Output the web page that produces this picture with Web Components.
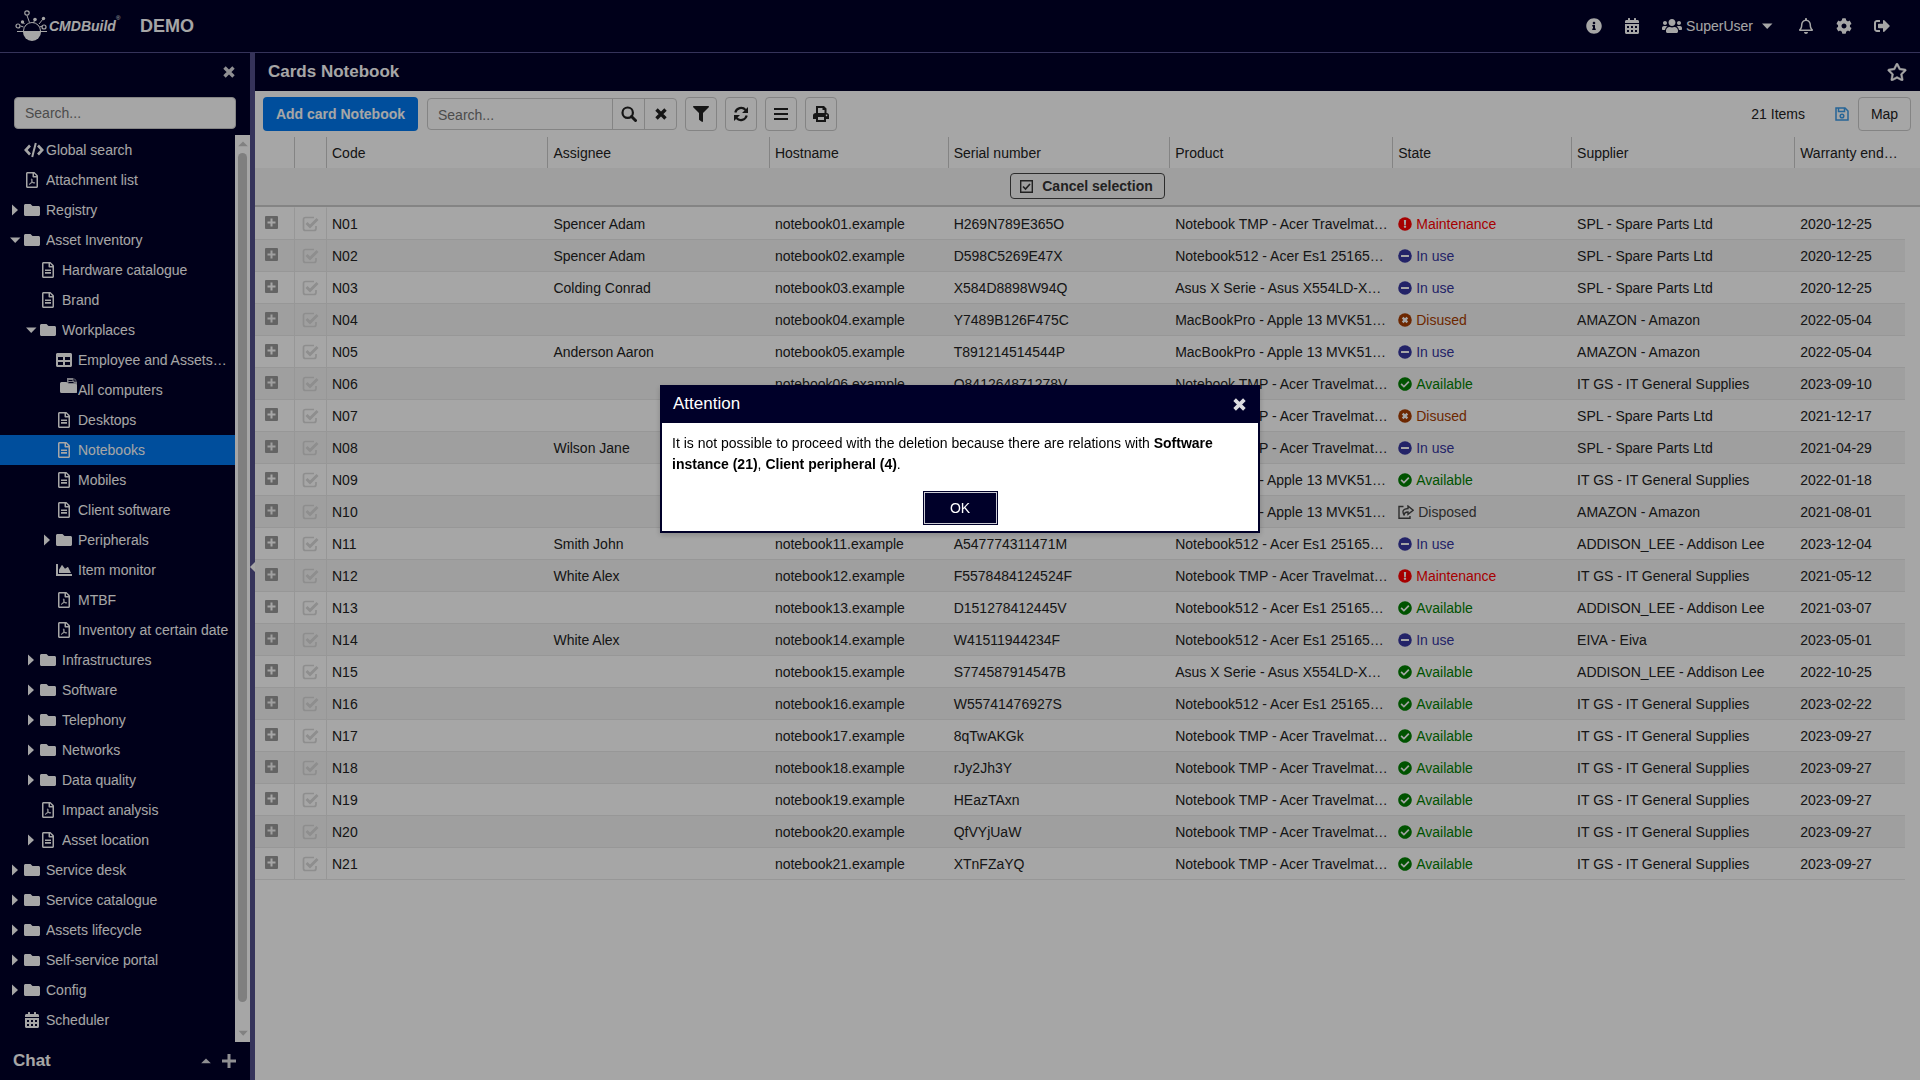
<!DOCTYPE html>
<html lang="en">
<head>
<meta charset="utf-8">
<title>CMDBuild - Cards Notebook</title>
<style>
  html, body { margin: 0; height: 100%; }
  body {
    font: 14px/20px "Liberation Sans", Arial, sans-serif;
    color: #222;
    --navy: #000029;
    --edge: #524f8a;
    --accent: #0079f0;
    --line: #cbcbcb;
    --rule: #e8e8e8;
    --stripe: #f5f5f5;
  }
</style>
</head>
<body>
<cmdb-app></cmdb-app>
<cmdb-dialog heading="Attention">It is not possible to proceed with the deletion because there are relations with <b>Software instance (21)</b>, <b>Client peripheral (4)</b>.</cmdb-dialog>

<script>
const FILE_OUTLINE = 'M384 131.900V464c0 26.500-21.500 48-48 48H48c-26.500 0-48-21.500-48-48V48C0 21.500 21.500 0 48 0h204.100C264.800 0 277 5.100 286 14.100L369.900 98c9 8.900 14.100 21.200 14.100 33.900zM256 51.900V128h76.100L256 51.900zM336 464V176H232c-13.300 0-24-10.700-24-24V48H48v416h288z';
const CAL_HOLE = 'c0-6.600 5.400-12 12-12h40c6.600 0 12 5.400 12 12v40c0 6.600-5.400 12-12 12h-40c-6.600 0-12-5.400-12-12v-40z';
const DISC = '<circle cx="256" cy="256" r="248"/>';

/* name: [viewBox, markup] */
const ICONS = {
  info: ['0 0 512 512', '<path d="M256 8C119.043 8 8 119.083 8 256c0 136.997 111.043 248 248 248s248-111.003 248-248C504 119.083 392.957 8 256 8zm0 110c23.196 0 42 18.804 42 42s-18.804 42-42 42-42-18.804-42-42 18.804-42 42-42zm56 254c0 6.627-5.373 12-12 12h-88c-6.627 0-12-5.373-12-12v-24c0-6.627 5.373-12 12-12h12v-64h-12c-6.627 0-12-5.373-12-12v-24c0-6.627 5.373-12 12-12h64c6.627 0 12 5.373 12 12v100h12c6.627 0 12 5.373 12 12v24z"/>'],
  calendar: ['0 0 448 512', `<path fill-rule="evenodd" d="M0 464c0 26.500 21.500 48 48 48h352c26.500 0 48-21.500 48-48V192H0v272zM320 268${CAL_HOLE}M320 396${CAL_HOLE}M192 268${CAL_HOLE}M192 396${CAL_HOLE}M64 268${CAL_HOLE}M64 396${CAL_HOLE}M400 64h-48V16c0-8.800-7.200-16-16-16h-32c-8.800 0-16 7.200-16 16v48H160V16c0-8.800-7.200-16-16-16h-32c-8.800 0-16 7.200-16 16v48H48C21.500 64 0 85.500 0 112v48h448v-48c0-26.500-21.500-48-48-48z"/>`],
  users: ['0 0 640 512', '<path d="M96 224c35.300 0 64-28.700 64-64s-28.700-64-64-64-64 28.700-64 64 28.700 64 64 64zm448 0c35.300 0 64-28.700 64-64s-28.700-64-64-64-64 28.700-64 64 28.700 64 64 64zm32 32h-64c-17.600 0-33.500 7.100-45.100 18.600 40.300 22.100 68.900 62 75.100 109.400h66c17.700 0 32-14.300 32-32v-32c0-35.300-28.700-64-64-64zm-256 0c61.900 0 112-50.100 112-112S381.900 32 320 32 208 82.100 208 144s50.100 112 112 112zm76.800 32h-8.300c-20.800 10-43.900 16-68.500 16s-47.600-6-68.500-16h-8.300C179.600 288 128 339.600 128 403.200V432c0 26.500 21.500 48 48 48h288c26.500 0 48-21.500 48-48v-28.800c0-63.600-51.600-115.200-115.200-115.200zm-223.700-13.400C161.500 263.100 145.600 256 128 256H64c-35.300 0-64 28.700-64 64v32c0 17.700 14.300 32 32 32h65.900c6.300-47.400 34.900-87.300 75.200-109.400z"/>'],
  bell: ['0 0 448 512', '<path d="M439.390 362.290c-19.320-20.760-55.470-51.990-55.470-154.290 0-77.700-54.480-139.900-127.940-155.160V32c0-17.670-14.320-32-31.980-32s-31.980 14.330-31.980 32v20.840C118.560 68.100 64.080 130.300 64.080 208c0 102.300-36.150 133.530-55.470 154.290-6 6.450-8.660 14.160-8.610 21.710.11 16.400 12.980 32 32.100 32h383.800c19.120 0 32-15.600 32.100-32 .05-7.550-2.610-15.270-8.610-21.710zM67.530 368c21.220-27.970 44.420-74.330 44.530-159.420 0-.2-.06-.38-.06-.58 0-61.860 50.140-112 112-112s112 50.140 112 112c0 .2-.06.38-.06.58.11 85.100 23.310 131.460 44.530 159.420H67.530zM224 512c35.320 0 63.970-28.650 63.970-64H160.030c0 35.350 28.650 64 63.970 64z"/>'],
  cog: ['0 0 512 512', '<path d="M487.400 315.700l-42.600-24.600c4.300-23.200 4.300-47 0-70.200l42.600-24.600c4.900-2.800 7.100-8.600 5.500-14-11.100-35.600-30-67.800-54.700-94.600-3.800-4.100-10-5.100-14.800-2.300L380.800 110c-17.900-15.400-38.500-27.300-60.800-35.100V25.800c0-5.600-3.900-10.500-9.400-11.700-36.700-8.200-74.300-7.800-109.200 0-5.500 1.200-9.400 6.100-9.400 11.700V75c-22.200 7.900-42.800 19.800-60.800 35.100L88.700 85.500c-4.900-2.800-11-1.900-14.800 2.300-24.700 26.700-43.600 58.900-54.700 94.600-1.700 5.400.6 11.200 5.500 14L67.300 221c-4.300 23.200-4.300 47 0 70.200l-42.600 24.600c-4.900 2.800-7.100 8.600-5.500 14 11.100 35.600 30 67.800 54.700 94.600 3.800 4.100 10 5.100 14.800 2.300l42.600-24.600c17.900 15.400 38.500 27.300 60.800 35.100v49.200c0 5.600 3.900 10.500 9.400 11.700 36.700 8.200 74.300 7.800 109.200 0 5.500-1.200 9.400-6.100 9.400-11.700v-49.200c22.200-7.900 42.800-19.800 60.800-35.100l42.600 24.600c4.900 2.800 11 1.900 14.800-2.300 24.700-26.700 43.600-58.900 54.700-94.600 1.500-5.500-.7-11.300-5.600-14.100zM256 336c-44.100 0-80-35.900-80-80s35.900-80 80-80 80 35.900 80 80-35.900 80-80 80z"/>'],
  signout: ['0 0 512 512', '<path d="M497 273L329 441c-15 15-41 4.500-41-17v-96H152c-13.300 0-24-10.700-24-24v-96c0-13.300 10.700-24 24-24h136V88c0-21.400 25.900-32 41-17l168 168c9.300 9.400 9.300 24.600 0 34zM192 436v-40c0-6.600-5.400-12-12-12H96c-17.700 0-32-14.300-32-32V160c0-17.700 14.300-32 32-32h84c6.600 0 12-5.400 12-12V76c0-6.600-5.400-12-12-12H96c-53 0-96 43-96 96v192c0 53 43 96 96 96h84c6.600 0 12-5.400 12-12z"/>'],
  star: ['0 0 576 512', '<path stroke="currentColor" stroke-width="14" d="M528.100 171.500L382 150.200 316.700 17.800c-11.700-23.600-45.600-23.900-57.400 0L194 150.200 47.900 171.500c-26.200 3.800-36.700 36.100-17.700 54.600l105.700 103-25 145.500c-4.500 26.300 23.200 46 46.400 33.700L288 439.600l130.700 68.700c23.200 12.200 50.900-7.400 46.400-33.700l-25-145.500 105.700-103c19-18.500 8.500-50.800-17.700-54.600zM388.600 312.300l23.700 138.400L288 385.400l-124.300 65.300 23.700-138.400-100.600-98 139-20.200 62.200-126 62.200 126 139 20.200-100.600 98z"/>'],
  folder: ['0 0 512 512', '<path d="M464 128H272l-64-64H48C21.490 64 0 85.490 0 112v288c0 26.510 21.490 48 48 48h416c26.510 0 48-21.490 48-48V176c0-26.510-21.490-48-48-48z"/>'],
  folderfile: ['0 0 18 18', '<path d="M7 1h7l3 3v12h-10z" opacity=".75"/><path d="M8.500 3.500h4M8.500 5.500h5M14 1v3h3" fill="none" stroke="#000029"/><path d="M1.500 5h5l2 2h7q1.500 0 1.500 1.500v6q0 1.500-1.500 1.500h-14q-1.500 0-1.500-1.500v-8q0-1.500 1.500-1.500z"/>'],
  code: ['0 0 20 16', '<g fill="none" stroke="currentColor" stroke-width="2.600"><path d="M6 3.500L1.800 8 6 12.500M14 3.500L18.200 8 14 12.500"/><path d="M11.800 1L8.200 15" stroke-width="2"/></g>'],
  file: ['0 0 384 512', `<path d="${FILE_OUTLINE}"/><path d="M96 236h192v52H96zM96 320h192v52H96z"/>`],
  pdf: ['0 0 384 512', `<path d="${FILE_OUTLINE}"/><path d="M178 222c18-12 22 16 14 58-12 46-38 96-66 116-20 10-26-10-6-26 34-26 84-38 132-36 36 0 36 28 8 24-42-8-66-46-80-90-8-26-10-40-2-46z" fill="none" stroke="currentColor" stroke-width="28"/>`],
  table: ['0 0 512 512', '<path d="M464 32H48C21.490 32 0 53.490 0 80v352c0 26.510 21.490 48 48 48h416c26.510 0 48-21.490 48-48V80c0-26.510-21.490-48-48-48zM224 416H64v-96h160v96zm0-160H64v-96h160v96zm224 160H288v-96h160v96zm0-160H288v-96h160v96z"/>'],
  chart: ['0 0 512 512', '<path d="M500 384c6.600 0 12 5.400 12 12v40c0 6.600-5.400 12-12 12H12c-6.600 0-12-5.400-12-12V76c0-6.600 5.400-12 12-12h40c6.600 0 12 5.400 12 12v308h436zM372.700 159.500L288 216l-85.300-113.700c-5.100-6.800-15.500-6.300-19.900 1L96 248v104h384l-89.900-187.800c-3.200-6.500-11.400-8.700-17.400-4.700z"/>'],
  right: ['0 0 16 16', '<path d="M5 2.500v11L11 8z"/>'],
  down: ['0 0 16 16', '<path d="M3 5.500h10.500L8.200 11z"/>'],
  up: ['0 0 16 16', '<path d="M2.500 10.500h11L8 5z"/>'],
  left: ['0 0 5 10', '<path d="M5 0v10L0 5z"/>'],
  plus: ['0 0 16 16', '<path d="M6.500 1h3v5.500H15v3H9.500V15h-3V9.500H1v-3h5.500z"/>'],
  close: ['0 0 12 12', '<path d="M1.500 1.500L10.500 10.500M10.500 1.500L1.500 10.500" fill="none" stroke="currentColor" stroke-width="3.400"/>'],
  search: ['0 0 16 16', '<g fill="none" stroke="currentColor" stroke-width="2.200"><circle cx="6.700" cy="6.700" r="5.200"/><path d="M10.500 10.500l4 4" stroke-width="3" stroke-linecap="round"/></g>'],
  filter: ['0 0 512 512', '<path d="M487.976 0H24.028C2.710 0-8.047 25.866 7.058 40.971L192 225.941V432c0 7.831 3.821 15.170 10.237 19.662l80 55.980C298.020 518.690 320 507.493 320 487.980V225.941l184.947-184.970C520.021 25.896 509.338 0 487.976 0z"/>'],
  refresh: ['0 0 16 16', '<path d="M2.300 6.500A6 6 0 0 1 12.600 4M13.700 9.500A6 6 0 0 1 3.400 12" fill="none" stroke="currentColor" stroke-width="2.200"/><path d="M15 1v6H9zM1 15V9h6z"/>'],
  menu: ['0 0 16 16', '<path d="M1 2h14v2H1zM1 7h14v2H1zM1 12h14v2H1z"/>'],
  print: ['0 0 16 16', '<path fill-rule="evenodd" d="M3 0h8l2.500 2.500V7q2.500 0 2.500 2.500V13h-3v3H3v-3H0V9.500Q0 7 3 7zM5 2v5h6.500V4H9.500V2zM5 11v3h6v-3zM13.500 8.500a.8 .8 0 1 0 .1 0z"/>'],
  save: ['0 0 14 14', '<g fill="none" stroke="currentColor" stroke-width="1.500"><path d="M1 1h9l3 3v9H1z"/><path d="M3.500 1v3.500h6V1"/><circle cx="7" cy="9" r="1.800"/></g>'],
  expand: ['0 0 13 13', '<path fill-rule="evenodd" d="M1 0h11q1 0 1 1v11q0 1-1 1H1q-1 0-1-1V1q0-1 1-1zM5.500 2.500v3h-3v2h3v3h2v-3h3v-2h-3v-3z"/>'],
  checkbox: ['0 0 13 13', '<path d="M.7 .7h11.600v11.600H.7z" fill="none" stroke="currentColor" stroke-width="1.400"/><path d="M3 6.500l2.500 2.500L10 4" fill="none" stroke="currentColor" stroke-width="1.700"/>'],
  available: ['0 0 512 512', '<path d="M504 256c0 136.967-111.033 248-248 248S8 392.967 8 256 119.033 8 256 8s248 111.033 248 248zM227.314 387.314l184-184c6.248-6.248 6.248-16.379 0-22.627l-22.627-22.627c-6.248-6.249-16.379-6.249-22.628 0L216 308.118l-70.059-70.059c-6.248-6.248-16.379-6.248-22.628 0l-22.627 22.627c-6.248 6.248-6.248 16.379 0 22.627l104 104c6.249 6.249 16.379 6.249 22.628.001z"/>'],
  inuse: ['0 0 512 512', DISC + '<rect x="110" y="216" width="292" height="80" rx="12" fill="#fff"/>'],
  maintenance: ['0 0 512 512', DISC + '<path d="M214 110h84l-12 180h-60z" fill="#fff"/><circle cx="256" cy="352" r="44" fill="#fff"/>'],
  disused: ['0 0 512 512', DISC + '<path d="M170 170l172 172M342 170L170 342" stroke="#fff" stroke-width="84" fill="none"/>'],
  disposed: ['0 0 16 14', '<g fill="none" stroke="currentColor" stroke-width="1.400"><path d="M5.500 1.500H1v11.800h11V11"/><path d="M10 1l5.200 4.200L10 9.400V7Q6 7 6.200 10.500 2.500 4 10 3.500z"/></g>'],
};

class UiIcon extends HTMLElement {
  connectedCallback() {
    const [box, body] = ICONS[this.getAttribute('name')];
    const w = this.getAttribute('w') || 16;
    const h = this.getAttribute('h') || w;
    this.attachShadow({ mode: 'open' }).innerHTML =
      `<style>:host{display:inline-flex;flex:none}svg{display:block}</style>
       <svg width="${w}" height="${h}" viewBox="${box}" fill="currentColor" aria-hidden="true">${body}</svg>`;
  }
}
customElements.define('ui-icon', UiIcon);

const BASE = `
  *, *::before { box-sizing: border-box; }
  button, input { font: inherit; color: inherit; margin: 0; }
  button { display: inline-flex; align-items: center; justify-content: center; padding: 0; border: 0; background: none; cursor: pointer; }
`;
const component = (name, css, html) => customElements.define(name, class extends HTMLElement {
  connectedCallback() {
    this.attachShadow({ mode: 'open' }).innerHTML =
      `<style>${BASE}${css}</style>` + (typeof html === 'function' ? html(this) : html);
  }
});

component('cmdb-logo', `
  :host { display: flex; align-items: center; width: 106px; color: #fff; }
  .word { font: italic bold 14px/20px "Liberation Sans", Arial, sans-serif; }
  sup { font: 6px/8px "Liberation Sans", Arial, sans-serif; align-self: flex-start; padding-top: 4px; }
`, `
  <svg width="34" height="32" viewBox="0 0 34 32" fill="none" stroke="#fff" stroke-width="1.200" aria-hidden="true">
    <path d="M8.500 21a8.500 8.500 0 0 1 17 0M2 21.500h30" stroke-width="1"/><path d="M8 22h18a9 9 0 0 1-18 0z" fill="#fff" stroke="none"/>
    <path d="M12 5.500l2.500 7M9.500 14L7 11.500M18.500 13L20 9M24 14l4-5M24.500 17l3-1M5.500 16l3 1" stroke-width="1"/>
    <circle cx="12" cy="3" r="2.200"/><circle cx="3" cy="16" r="2"/><circle cx="29" cy="17" r="2"/>
    <circle cx="7.500" cy="12" r="1.700" fill="#fff" stroke="none"/><circle cx="20" cy="9.500" r="1.800" fill="#fff" stroke="none"/><circle cx="28.500" cy="8.500" r="1.700" fill="#fff" stroke="none"/>
  </svg>
  <span class="word">CMDBuild</span><sup>®</sup>
`);

component('cmdb-header', `
  :host { display: flex; align-items: center; height: 53px; padding: 0 19px 0 15px; box-sizing: border-box;
          background: var(--navy); border-bottom: 1px solid var(--edge); color: #fff; }
  h1 { flex: 1; margin: 0 0 0 19px; font-size: 18px; line-height: 20px; }
  nav { display: flex; align-items: center; }
  button { width: 38px; height: 38px; }
  .user { width: auto; padding: 0 12px 0 11px; gap: 4px; }
  .user ui-icon:last-child { margin-left: 2px; }
`, `
  <cmdb-logo></cmdb-logo><h1>DEMO</h1>
  <nav>
    <button aria-label="Information"><ui-icon name="info"></ui-icon></button>
    <button aria-label="Calendar"><ui-icon name="calendar"></ui-icon></button>
    <button class="user"><ui-icon name="users" w="20" h="16"></ui-icon>SuperUser<ui-icon name="down"></ui-icon></button>
    <button aria-label="Notifications"><ui-icon name="bell"></ui-icon></button>
    <button aria-label="Settings"><ui-icon name="cog"></ui-icon></button>
    <button aria-label="Log out"><ui-icon name="signout"></ui-icon></button>
  </nav>
`);

component('nav-item', `
  :host { display: block; }
  a { display: flex; align-items: center; height: 30px; padding-left: calc(7px + 16px * var(--level, 0)); color: #fff; text-decoration: none; }
  :host([selected]) a { background: var(--accent); }
  .toggle { display: flex; width: 17px; flex: none; }
  .icon { display: flex; width: 22px; flex: none; }
  .icon.file { padding-left: 2px; }
  .icon.folderfile { padding: 0 0 8px 4px; }
  .text { overflow: hidden; text-overflow: ellipsis; white-space: nowrap; padding-right: 6px; }
`, el => {
  const icon = el.getAttribute('icon'), toggle = el.getAttribute('toggle');
  const narrow = ['file', 'pdf'].includes(icon);
  const w = narrow ? 12 : icon === 'code' ? 20 : icon === 'folderfile' ? 18 : 16;
  const h = icon === 'folderfile' ? 18 : 16;
  return `<a href="#"><span class="toggle">${toggle ? `<ui-icon name="${toggle}"></ui-icon>` : ''}</span>
    <span class="icon ${narrow ? 'file' : icon}"><ui-icon name="${icon}" w="${w}" h="${h}"></ui-icon></span>
    <span class="text"><slot></slot></span></a>`;
});

/* level, toggle, icon, label */
const MENU = [
  [0, '', 'code', 'Global search'], [0, '', 'pdf', 'Attachment list'], [0, 'right', 'folder', 'Registry'],
  [0, 'down', 'folder', 'Asset Inventory'], [1, '', 'file', 'Hardware catalogue'], [1, '', 'file', 'Brand'],
  [1, 'down', 'folder', 'Workplaces'], [2, '', 'table', 'Employee and Assets…'], [2, '', 'folderfile', 'All computers'],
  [2, '', 'file', 'Desktops'], [2, '', 'file', 'Notebooks'], [2, '', 'file', 'Mobiles'], [2, '', 'file', 'Client software'],
  [2, 'right', 'folder', 'Peripherals'], [2, '', 'chart', 'Item monitor'], [2, '', 'pdf', 'MTBF'],
  [2, '', 'pdf', 'Inventory at certain date'], [1, 'right', 'folder', 'Infrastructures'], [1, 'right', 'folder', 'Software'],
  [1, 'right', 'folder', 'Telephony'], [1, 'right', 'folder', 'Networks'], [1, 'right', 'folder', 'Data quality'],
  [1, '', 'pdf', 'Impact analysis'], [1, 'right', 'file', 'Asset location'], [0, 'right', 'folder', 'Service desk'],
  [0, 'right', 'folder', 'Service catalogue'], [0, 'right', 'folder', 'Assets lifecycle'],
  [0, 'right', 'folder', 'Self-service portal'], [0, 'right', 'folder', 'Config'], [0, '', 'calendar', 'Scheduler'],
];

component('cmdb-sidebar', `
  :host { display: flex; flex-direction: column; min-height: 0; background: var(--navy); color: #fff; }
  .top { display: flex; justify-content: flex-end; padding: 13px 15px 0 0; height: 44px; color: #dcdce0; }
  .top button { height: 12px; }
  .find { display: block; padding: 0 14px 6px; }
  .find input { display: block; width: 100%; height: 32px; padding: 0 10px; border: 1px solid #ccc; border-radius: 4px; background: #fff; color: #222; }
  input::placeholder { color: #757575; opacity: 1; }
  .tree { display: flex; flex: 1; min-height: 0; }
  nav { flex: 1; min-width: 0; overflow: hidden; }
  .bar { display: flex; flex-direction: column; align-items: center; width: 15px; background: #fff; color: #c6c6c6; }
  .bar span { display: flex; height: 18px; align-items: center; }
  .bar i { width: 9px; flex: 1; border-radius: 5px; background: #c4c4c4; margin-bottom: 22px; }
  .chat { display: flex; align-items: center; height: 38px; padding: 0 13px; gap: 8px; color: #dcdce0; }
  h2 { flex: 1; margin: 0; font-size: 17px; line-height: 20px; color: #fff; }
`, `
  <div class="top"><button aria-label="Close menu"><ui-icon name="close" w="12"></ui-icon></button></div>
  <label class="find"><input type="text" placeholder="Search..." aria-label="Search menu"></label>
  <div class="tree">
    <nav>${MENU.map(([l, t, i, s]) => `<nav-item style="--level:${l}" toggle="${t}" icon="${i}"${s === 'Notebooks' ? ' selected' : ''}>${s}</nav-item>`).join('')}</nav>
    <div class="bar"><span><ui-icon name="up" w="14"></ui-icon></span><i></i><span><ui-icon name="down" w="14"></ui-icon></span></div>
  </div>
  <div class="chat"><h2>Chat</h2><button aria-label="Expand chat"><ui-icon name="up" w="14"></ui-icon></button><button aria-label="New chat"><ui-icon name="plus"></ui-icon></button></div>
`);

component('cmdb-toolbar', `
  :host { display: flex; align-items: center; height: 46px; padding: 0 9px 0 8px; box-sizing: border-box; gap: 8px; }
  button { height: 34px; }
  .add { width: 155px; border-radius: 4px; background: var(--accent); color: #fff; font-weight: bold; margin-right: 1px; }
  .find { display: flex; width: 250px; height: 32px; border: 1px solid var(--line); border-radius: 4px; }
  .find input { flex: 1; min-width: 0; padding: 1px 10px 0; border: 0; background: none; }
  .find button { width: 32px; height: 30px; border-left: 1px solid var(--line); }
  input::placeholder { color: #757575; opacity: 1; }
  .sq { width: 32px; border: 1px solid var(--line); border-radius: 4px; }
  .count { margin-left: auto; }
  .save { color: #3b9be8; margin: 0 1px 0 22px; }
  .map { width: 53px; border: 1px solid var(--line); border-radius: 4px; }
`, `
  <button class="add">Add card Notebook</button>
  <div class="find"><input type="text" placeholder="Search..." aria-label="Search cards"><button aria-label="Search"><ui-icon name="search"></ui-icon></button><button aria-label="Clear"><ui-icon name="close" w="12"></ui-icon></button></div>
  <button class="sq" aria-label="Filter"><ui-icon name="filter"></ui-icon></button>
  <button class="sq" aria-label="Refresh"><ui-icon name="refresh"></ui-icon></button>
  <button class="sq" aria-label="Menu"><ui-icon name="menu"></ui-icon></button>
  <button class="sq" aria-label="Print"><ui-icon name="print"></ui-icon></button>
  <span class="count">21 Items</span>
  <button class="save" aria-label="Save view"><ui-icon name="save" w="14"></ui-icon></button>
  <button class="map">Map</button>
`);

component('card-state', `
  :host { display: inline-flex; align-items: center; gap: 4px; vertical-align: top; }
  :host([kind=maintenance]) { color: #f00; }
  :host([kind=inuse]) { color: #3636a0; }
  :host([kind=disused]) { color: #a83d00; }
  :host([kind=available]) { color: #008000; }
  :host([kind=disposed]) { color: #444; }
`, el => {
  const kind = el.getAttribute('kind');
  return `<ui-icon name="${kind}" w="${kind === 'disposed' ? 16 : 14}" h="14"></ui-icon><slot></slot>`;
});

const T = 'Notebook TMP - Acer Travelmat…', E = 'Notebook512 - Acer Es1 25165…',
      X = 'Asus X Serie - Asus X554LD-X…', M = 'MacBookPro - Apple 13 MVK51…';
const SPL = 'SPL - Spare Parts Ltd', AMZ = 'AMAZON - Amazon', GS = 'IT GS - IT General Supplies', LEE = 'ADDISON_LEE - Addison Lee';
const STATES = { maintenance: 'Maintenance', inuse: 'In use', disused: 'Disused', available: 'Available', disposed: 'Disposed' };
/* assignee, serial number, product, state, supplier, warranty end */
const CARDS = [
  ['Spencer Adam', 'H269N789E365O', T, 'maintenance', SPL, '2020-12-25'],
  ['Spencer Adam', 'D598C5269E47X', E, 'inuse', SPL, '2020-12-25'],
  ['Colding Conrad', 'X584D8898W94Q', X, 'inuse', SPL, '2020-12-25'],
  ['', 'Y7489B126F475C', M, 'disused', AMZ, '2022-05-04'],
  ['Anderson Aaron', 'T891214514544P', M, 'inuse', AMZ, '2022-05-04'],
  ['', 'Q841264871278V', T, 'available', GS, '2023-09-10'],
  ['', '', T, 'disused', SPL, '2021-12-17'],
  ['Wilson Jane', '', T, 'inuse', SPL, '2021-04-29'],
  ['', '', M, 'available', GS, '2022-01-18'],
  ['', '', M, 'disposed', AMZ, '2021-08-01'],
  ['Smith John', 'A547774311471M', E, 'inuse', LEE, '2023-12-04'],
  ['White Alex', 'F5578484124524F', T, 'maintenance', GS, '2021-05-12'],
  ['', 'D151278412445V', E, 'available', LEE, '2021-03-07'],
  ['White Alex', 'W41511944234F', E, 'inuse', 'EIVA - Eiva', '2023-05-01'],
  ['', 'S774587914547B', X, 'available', LEE, '2022-10-25'],
  ['', 'W55741476927S', E, 'available', GS, '2023-02-22'],
  ['', '8qTwAKGk', T, 'available', GS, '2023-09-27'],
  ['', 'rJy2Jh3Y', T, 'available', GS, '2023-09-27'],
  ['', 'HEazTAxn', T, 'available', GS, '2023-09-27'],
  ['', 'QfVYjUaW', T, 'available', GS, '2023-09-27'],
  ['', 'XTnFZaYQ', T, 'available', GS, '2023-09-27'],
];
const COLS = ['Code', 'Assignee', 'Hostname', 'Serial number', 'Product', 'State', 'Supplier', 'Warranty end…'];
const TICK = `url("data:image/svg+xml,%3Csvg xmlns='http://www.w3.org/2000/svg' viewBox='0 0 17 16' fill='none' stroke='%23dadada'%3E%3Cpath d='M12 1.500H3.500Q1.500 1.500 1.500 3.500v9q0 2 2 2h8.500q2 0 2-2V10' stroke-width='1.700'/%3E%3Cpath d='M4.500 7l3.500 3.500L15.500 3' stroke-width='3'/%3E%3C/svg%3E")`;

component('card-grid', `
  :host { display: block; }
  table { width: 100%; table-layout: fixed; border-collapse: separate; border-spacing: 0; }
  .c-exp { width: 40px; } .c-tick { width: 32px; } .c-gap { width: 15px; }
  .c-wide { width: 13.300%; } .c-text { width: 13.400%; } .c-mid { width: 10.740%; }
  th, td { padding: 0 2px 0 5px; text-align: left; font-weight: normal; overflow: hidden; text-overflow: ellipsis; white-space: nowrap; }
  .heads th { height: 31px; border-right: 1px solid var(--line); }
  .heads th:nth-last-child(-n+2) { border-right: 0; }
  .sel td { height: 39px; padding: 0 0 1px; text-align: center; background: var(--stripe); border-bottom: 2px solid var(--line); }
  .sel button { width: 155px; height: 26px; gap: 9px; padding-right: 2px; border: 1px solid #444; border-radius: 4px; font-weight: bold; color: #333; vertical-align: middle; }
  tbody td { height: 32px; border-bottom: 1px solid var(--rule); }
  tbody tr:first-child td { height: 33px; border-top: 1px solid #fff; }
  tbody tr:nth-child(even) td:not(:last-child) { background: var(--stripe); }
  tbody td:last-child { border-bottom: 0; }
  td.exp, td.tick { border-right: 1px solid var(--rule); }
  td.exp { padding: 0 0 2px 10px; color: #9a9a9a; line-height: 0; }
  td.tick { padding: 0 0 0 7px; line-height: 0; }
  td.exp button { vertical-align: middle; }
  td.tick input { appearance: none; width: 17px; height: 16px; background: ${TICK} center / contain no-repeat; vertical-align: middle; }
`, `
  <table>
    <colgroup><col class="c-exp"><col class="c-tick"><col class="c-wide"><col class="c-wide"><col class="c-mid"><col class="c-wide"><col class="c-text"><col class="c-mid"><col class="c-text"><col><col class="c-gap"></colgroup>
    <thead>
      <tr class="heads"><th></th><th></th>${COLS.map(c => `<th scope="col">${c}</th>`).join('')}<th></th></tr>
      <tr class="sel"><td colspan="11"><button><ui-icon name="checkbox" w="13"></ui-icon>Cancel selection</button></td></tr>
    </thead>
    <tbody>${CARDS.map(([who, sn, prod, state, sup, end], i) => {
      const n = String(i + 1).padStart(2, '0');
      const covered = i >= 6 && i <= 9;
      return `<tr><td class="exp"><button aria-label="Expand N${n}"><ui-icon name="expand" w="13"></ui-icon></button></td>
        <td class="tick"><input type="checkbox" checked disabled aria-label="Select N${n}"></td>
        <td>N${n}</td><td>${who}</td><td>${covered ? '' : `notebook${n}.example`}</td><td>${sn}</td><td>${prod}</td>
        <td><card-state kind="${state}">${STATES[state]}</card-state></td><td>${sup}</td><td>${end}</td><td></td></tr>`;
    }).join('')}</tbody>
  </table>
`);

component('cmdb-app', `
  :host { display: flex; flex-direction: column; height: 100vh; background: #fff; }
  .body { display: flex; flex: 1; min-height: 0; }
  cmdb-sidebar { width: 250px; flex: none; }
  .split { width: 5px; flex: none; background: var(--edge); color: #fff; }
  main { flex: 1; min-width: 0; overflow: hidden; }
  .title { display: flex; align-items: center; justify-content: space-between; height: 38px; padding: 0 13px; background: var(--navy); color: #fff; }
  h2 { margin: 0; font-size: 17px; line-height: 20px; }
`, `
  <cmdb-header></cmdb-header>
  <div class="body">
    <cmdb-sidebar></cmdb-sidebar>
    <button class="split" aria-label="Collapse menu"><ui-icon name="left" w="5" h="10"></ui-icon></button>
    <main>
      <div class="title"><h2>Cards Notebook</h2><button aria-label="Favourite"><ui-icon name="star" w="20" h="18"></ui-icon></button></div>
      <cmdb-toolbar></cmdb-toolbar>
      <card-grid></card-grid>
    </main>
  </div>
`);

component('cmdb-dialog', `
  :host { position: fixed; inset: 0; display: flex; align-items: center; justify-content: center; padding-bottom: 15vh; box-sizing: border-box;
          background: rgba(0, 0, 0, .35); color: #000; }
  section { width: 600px; background: #fff; border: 2px solid var(--navy); box-shadow: 0 2px 6px rgba(0, 0, 0, .2); }
  header { display: flex; align-items: center; justify-content: space-between; height: 36px; padding: 0 12px 2px 11px; background: var(--navy); color: #fff; }
  h2 { margin: 0; font-size: 17px; font-weight: normal; line-height: 20px; }
  header button { color: #dcdce0; }
  p { margin: 0; padding: 10px 10px 16px; line-height: 21px; }
  footer { display: flex; justify-content: center; padding-bottom: 6px; }
  footer button { width: 75px; height: 34px; background: var(--navy); color: #fff; border: 1px solid var(--navy); outline: 1px solid #ccccd4; outline-offset: -2px; }
`, el => `
  <section role="dialog" aria-label="${el.getAttribute('heading')}">
    <header><h2>${el.getAttribute('heading')}</h2><button aria-label="Close"><ui-icon name="close" w="13"></ui-icon></button></header>
    <p><slot></slot></p>
    <footer><button>OK</button></footer>
  </section>
`);
</script>
</body>
</html>
